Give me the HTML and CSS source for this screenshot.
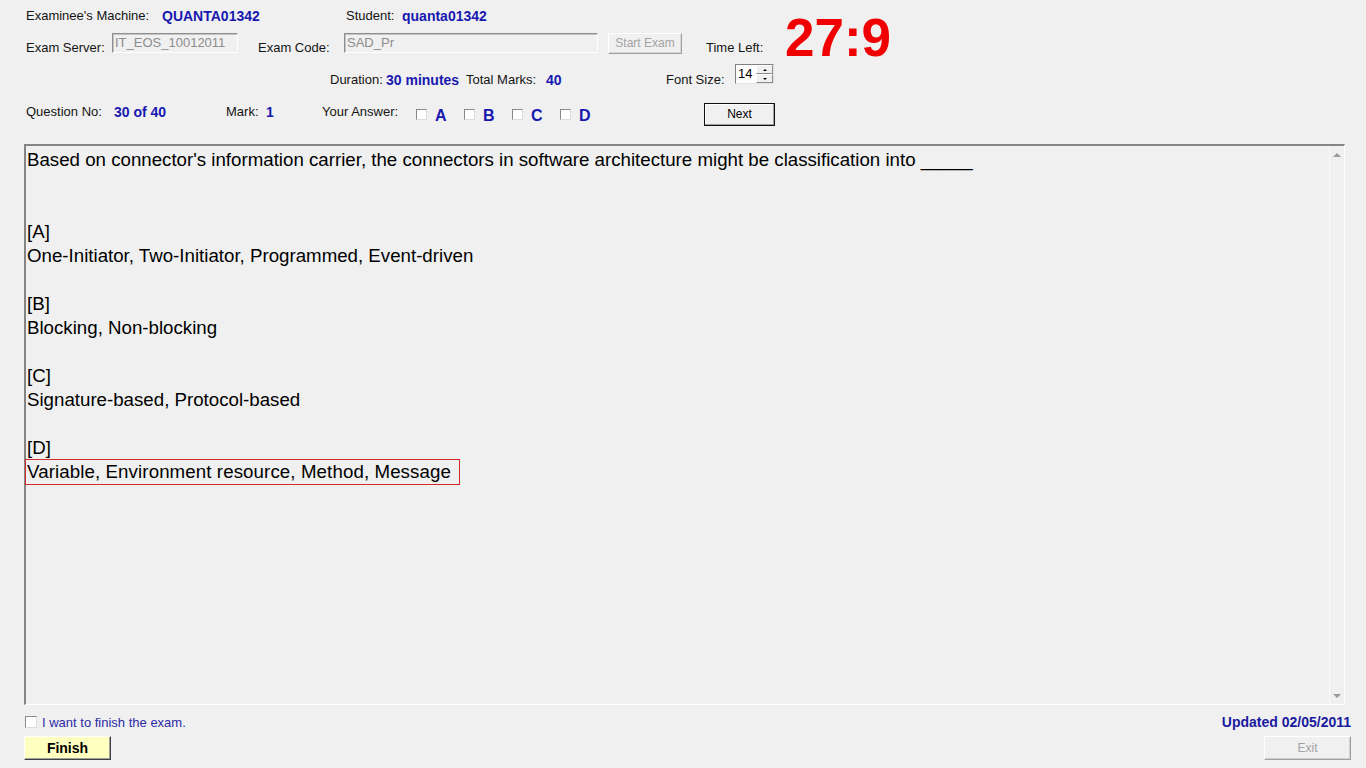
FILE: index.html
```html
<!DOCTYPE html>
<html>
<head>
<meta charset="utf-8">
<title>EOS Exam</title>
<link rel="stylesheet" href="styles.css">
</head>
<body>
<div class="top">
  <div class="top-left">
    <div class="row r1">
      <span class="w-machine">Examinee's Machine:</span>
      <span class="val w-machine-val">QUANTA01342</span>
      <span class="w-student">Student:</span>
      <span class="val">quanta01342</span>
    </div>
    <div class="row r2">
      <span class="lbl-low w-server">Exam Server:</span>
      <span class="tbox w-server-box">IT_EOS_10012011</span>
      <span class="lbl-low w-code">Exam Code:</span>
      <span class="tbox w-code-box">SAD_Pr</span>
      <span class="btn-dis start-btn">Start Exam</span>
      <span class="lbl-low time-lbl">Time Left:</span>
    </div>
  </div>
  <div class="clock">27:9</div>
</div>

<div class="row r3">
  <span class="lbl-mid w-dur">Duration:</span>
  <span class="lbl-mid val w-dur-val">30 minutes</span>
  <span class="lbl-mid w-total">Total Marks:</span>
  <span class="lbl-mid val w-total-val">40</span>
  <span class="lbl-mid w-font">Font Size:</span>
  <div class="spin">
    <span class="spin-val">14</span>
    <div class="spin-btns">
      <span class="spin-btn"><i class="tri-up"></i></span>
      <span class="spin-btn"><i class="tri-down"></i></span>
    </div>
  </div>
</div>

<div class="row r4">
  <span class="lbl-top w-qno">Question No:</span>
  <span class="lbl-top val w-qno-val">30 of 40</span>
  <span class="lbl-top w-mark">Mark:</span>
  <span class="lbl-top val w-mark-val">1</span>
  <span class="lbl-top w-ans">Your Answer:</span>
  <span class="ans"><i class="chk"></i><b>A</b></span>
  <span class="ans"><i class="chk"></i><b>B</b></span>
  <span class="ans"><i class="chk"></i><b>C</b></span>
  <span class="ans"><i class="chk"></i><b>D</b></span>
  <span class="next-btn">Next</span>
</div>

<div class="qbox">
  <div class="qtext">
    <p class="question">Based on connector's information carrier, the connectors in software architecture might be classification into _____</p>
    <div class="option"><div>[A]</div><div>One-Initiator, Two-Initiator, Programmed, Event-driven</div></div>
    <div class="option"><div>[B]</div><div>Blocking, Non-blocking</div></div>
    <div class="option"><div>[C]</div><div>Signature-based, Protocol-based</div></div>
    <div class="option"><div>[D]</div><div><span class="chosen">Variable, Environment resource, Method, Message</span></div></div>
  </div>
  <div class="vscroll">
    <i class="sb-up"></i>
    <i class="sb-down"></i>
  </div>
</div>

<div class="foot-row1">
  <label class="finish-chk"><i class="chk"></i><span>I want to finish the exam.</span></label>
  <span class="updated">Updated 02/05/2011</span>
</div>
<div class="foot-row2">
  <span class="finish-btn">Finish</span>
  <span class="exit-btn">Exit</span>
</div>
</body>
</html>
```

FILE: styles.css
```css
html, body {
  margin: 0;
  padding: 0;
}
body {
  width: 1366px;
  height: 768px;
  overflow: hidden;
  background: #f0f0f0;
  font-family: "Liberation Sans", Arial, sans-serif;
  font-size: 13px;
  color: #141414;
}
.row {
  display: flex;
  align-items: flex-start;
}
.row > span { flex: none; }
.val {
  color: #1818b0;
  font-weight: bold;
  font-size: 14px;
}

/* top area */
.top {
  display: flex;
  padding-left: 26px;
  height: 54px;
}
.top-left {
  width: 759px;
  flex: none;
  padding-top: 8px;
}
.r1 {
  height: 16px;
  line-height: 16px;
}
.w-machine { width: 136px; }
.w-machine-val { width: 184px; }
.w-student { width: 56px; }

.r2 {
  margin-top: 9px;
  height: 21px;
}
.lbl-low {
  padding-top: 7px;
  line-height: 16px;
}
.w-server { width: 86px; }
.w-code { width: 86px; margin-left: 20px; }
.tbox {
  box-sizing: border-box;
  height: 20px;
  border: 1px solid;
  border-color: #8f8f8f #ffffff #ffffff #8f8f8f;
  box-shadow: inset 1px 1px 0 #c4c4c4;
  color: #8d8d8d;
  padding: 1px 2px 0 2px;
  line-height: 15px;
  font-size: 13px;
}
.w-server-box { width: 126px; }
.w-code-box { width: 254px; }
.btn-dis {
  box-sizing: border-box;
  height: 21px;
  border: 1px solid;
  border-color: #ffffff #a0a0a0 #a0a0a0 #ffffff;
  box-shadow: inset -1px -1px 0 #d8d8d8;
  color: #a3a3a3;
  font-size: 12px;
  text-align: center;
  line-height: 18px;
}
.start-btn {
  width: 74px;
  margin-left: 10px;
}
.time-lbl { margin-left: 24px; }
.clock {
  margin-top: 11px;
  font-size: 53px;
  line-height: 53px;
  font-weight: bold;
  color: #f00000;
}

/* row 3 */
.r3 {
  margin-top: 10px;
  height: 20px;
  padding-left: 26px;
}
.lbl-mid {
  padding-top: 8px;
  line-height: 16px;
}
.w-dur { width: 56px; margin-left: 304px; }
.w-dur-val { width: 80px; }
.w-total { width: 80px; }
.w-total-val { width: 120px; }
.w-font { width: 69px; }
.spin {
  box-sizing: border-box;
  width: 39px;
  height: 20px;
  border: 1px solid;
  border-color: #828282 #e4e4e4 #e4e4e4 #828282;
  background: #ffffff;
  display: flex;
}
.spin-val {
  flex: 1;
  padding: 1px 0 0 2px;
  line-height: 15px;
  font-size: 13px;
  color: #000;
}
.spin-btns {
  width: 17px;
  display: flex;
  flex-direction: column;
}
.spin-btn {
  flex: 1;
  box-sizing: border-box;
  background: #f0f0f0;
  border: 1px solid;
  border-color: #ffffff #8a8a8a #8a8a8a #ffffff;
  display: flex;
  align-items: center;
  justify-content: center;
}
.tri-up, .tri-down {
  width: 0;
  height: 0;
  border-left: 2px solid transparent;
  border-right: 2px solid transparent;
}
.tri-up { border-bottom: 2px solid #000; }
.tri-down { border-top: 2px solid #000; }

/* row 4 */
.r4 {
  margin-top: 19px;
  height: 23px;
  padding-left: 26px;
}
.lbl-top {
  padding-top: 1px;
  line-height: 16px;
}
.w-qno { width: 88px; }
.w-qno-val { width: 112px; }
.w-mark { width: 40px; }
.w-mark-val { width: 56px; }
.w-ans { width: 94px; }
.ans {
  width: 48px;
  display: flex;
  align-items: flex-start;
  padding-top: 5px;
}
.ans b {
  font-size: 16px;
  line-height: 16px;
  color: #1818b0;
}
.chk {
  display: block;
  box-sizing: border-box;
  width: 11px;
  height: 11px;
  background: #ffffff;
  border: 1px solid;
  border-color: #8a8a8a #dcdcdc #dcdcdc #8a8a8a;
}
.ans .chk {
  margin-top: 1px;
  margin-right: 8px;
}
.next-btn {
  box-sizing: border-box;
  width: 71px;
  height: 23px;
  margin-left: 96px;
  border: 1px solid #101010;
  box-shadow: inset -1px -1px 0 #a0a0a0, inset 1px 1px 0 #ffffff;
  font-size: 12px;
  line-height: 21px;
  text-align: center;
  color: #000;
}

/* question box */
.qbox {
  margin: 18px 0 0 24px;
  box-sizing: border-box;
  width: 1321px;
  height: 561px;
  border-style: solid;
  border-width: 2px 1px 1px 2px;
  border-color: #858585 #ffffff #ffffff #858585;
  display: flex;
}
.qtext {
  flex: 1;
  padding: 2px 0 0 1px;
  font-size: 18.7px;
  line-height: 24px;
  color: #000;
}
.question {
  margin: 0 0 48px 0;
}
.option {
  margin-bottom: 24px;
}
.chosen {
  display: inline-block;
  border: 1px solid #d32a2a;
  margin-left: -2px;
  margin-top: -1px;
  padding: 0 8px 0 1px;
  letter-spacing: 0.1px;
}
.vscroll {
  width: 14px;
  flex: none;
  border-left: 1px solid #fbfbfb;
  display: flex;
  flex-direction: column;
  justify-content: space-between;
  align-items: center;
  padding: 7px 0 6px 0;
}
.sb-up, .sb-down {
  display: block;
  width: 0;
  height: 0;
  border-left: 4px solid transparent;
  border-right: 4px solid transparent;
}
.sb-up { border-bottom: 4px solid #9a9a9a; }
.sb-down { border-top: 4px solid #9a9a9a; }

/* footer */
.foot-row1 {
  margin-top: 11px;
  height: 12px;
  padding: 0 15px 0 24px;
  display: flex;
  justify-content: space-between;
  align-items: center;
}
.finish-chk {
  display: flex;
  align-items: center;
  color: #2a2aa8;
  font-size: 13px;
}
.finish-chk .chk {
  width: 12px;
  height: 12px;
  margin-left: 1px;
  margin-right: 5px;
}
.updated {
  color: #1a1aa0;
  font-weight: bold;
  font-size: 14px;
}
.foot-row2 {
  margin-top: 8px;
  padding: 0 15px 0 24px;
  display: flex;
  justify-content: space-between;
}
.finish-btn, .exit-btn {
  box-sizing: border-box;
  width: 87px;
  height: 24px;
  border: 1px solid;
  text-align: center;
  line-height: 22px;
}
.finish-btn {
  background: #ffffc0;
  border-color: #ffffff #404040 #404040 #ffffff;
  box-shadow: inset -1px -1px 0 #a0a0a0;
  font-weight: bold;
  font-size: 14px;
  color: #000;
}
.exit-btn {
  background: #f0f0f0;
  border-color: #ffffff #a0a0a0 #a0a0a0 #ffffff;
  box-shadow: inset -1px -1px 0 #d0d0d0;
  color: #a3a3a3;
  font-size: 12px;
}
```
